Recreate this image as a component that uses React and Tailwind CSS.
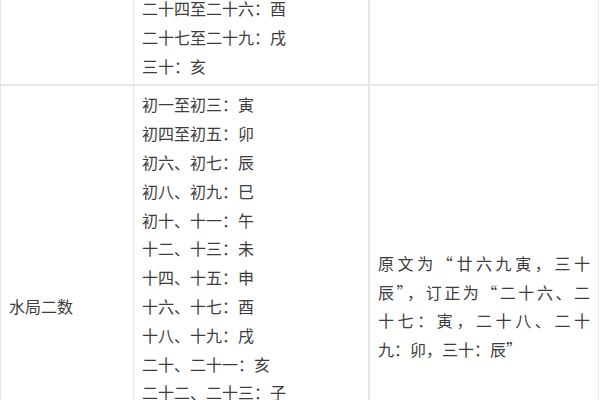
import React from "react";

const topLines = ["二十四至二十六：酉", "二十七至二十九：戌", "三十：亥"];
const waterLines = [
  "初一至初三：寅",
  "初四至初五：卯",
  "初六、初七：辰",
  "初八、初九：巳",
  "初十、十一：午",
  "十二、十三：未",
  "十四、十五：申",
  "十六、十七：酉",
  "十八、十九：戌",
  "二十、二十一：亥",
  "二十二、二十三：子",
  "二十四、二十五：丑",
  "二十六、二十七：寅",
  "二十八、二十九：卯",
  "三十：辰",
];

const noteLines = [
  { t: "原文为“廿六九寅，三十", j: true },
  { t: "辰”，订正为“二十六、二", j: true },
  { t: "十七：寅，二十八、二十", j: true },
  { t: "九：卯，三十：辰”", j: false },
];

export default function App() {
  return (
    <div
      className="w-[600px] h-[400px] overflow-hidden bg-white text-[#3d3d3d] text-[16px] leading-[28.8px]"
      style={{ fontFamily: '"Noto Sans CJK SC", "Noto Sans", sans-serif' }}
    >
      <div className="-mt-[10px] w-[598px] grid grid-cols-[133px_236px_229px] border-l border-[#e6e6e6]">
        {/* previous row */}
        <div className="border-r border-b-2 border-[#e6e6e6]" />
        <div className="border-r-2 border-b-2 border-[#e6e6e6] px-2 pt-1 pb-1">
          {topLines.map((l) => (
            <div key={l}>{l}</div>
          ))}
        </div>
        <div className="border-r border-b-2 border-[#e6e6e6]" />

        {/* water row */}
        <div className="border-r border-b-2 border-[#e6e6e6] px-2 flex items-center">
          水局二数
        </div>
        <div className="border-r-2 border-b-2 border-[#e6e6e6] px-2 pt-1 pb-1">
          {waterLines.map((l) => (
            <div key={l}>{l}</div>
          ))}
        </div>
        <div className="border-r border-b-2 border-[#e6e6e6] px-2 flex items-center">
          <div className="w-full">
            {noteLines.map((l) => (
              <div
                key={l.t}
                className={l.j ? "text-justify [text-align-last:justify]" : ""}
              >
                {l.t}
              </div>
            ))}
          </div>
        </div>
      </div>
    </div>
  );
}
